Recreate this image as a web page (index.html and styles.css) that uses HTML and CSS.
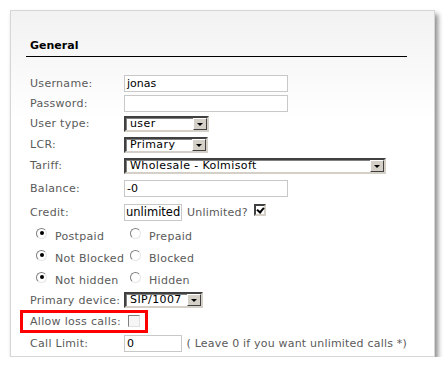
FILE: index.html
```html
<!DOCTYPE html>
<html lang="en">
<head>
    <meta charset="UTF-8">
    <title>User - General</title>
    <link rel="stylesheet" href="styles.css">
</head>
<body>
    <div class="panel">
        <div class="section">
            <h2 class="section-title">General</h2>

            <div class="row">
                <label class="lbl">Username:</label>
                <span class="field wide">jonas</span>
            </div>
            <div class="row">
                <label class="lbl">Password:</label>
                <span class="field wide"></span>
            </div>
            <div class="row row-select">
                <label class="lbl">User type:</label>
                <span class="select w-user"><span class="sel-text">user</span><span class="sel-btn"></span></span>
            </div>
            <div class="row row-select">
                <label class="lbl">LCR:</label>
                <span class="select w-lcr"><span class="sel-text">Primary</span><span class="sel-btn"></span></span>
            </div>
            <div class="row row-select">
                <label class="lbl">Tariff:</label>
                <span class="select w-tariff"><span class="sel-text">Wholesale - Kolmisoft</span><span class="sel-btn"></span></span>
            </div>
            <div class="row row-tall">
                <label class="lbl">Balance:</label>
                <span class="field wide">-0</span>
            </div>
            <div class="row row-tall">
                <label class="lbl">Credit:</label>
                <span class="field short big">unlimited</span>
                <span class="note">Unlimited?</span>
                <span class="check checked"></span>
            </div>

            <div class="radios">
                <div class="radio-row">
                    <span class="radio-opt"><span class="radio on"></span>Postpaid</span>
                    <span class="radio-opt"><span class="radio"></span>Prepaid</span>
                </div>
                <div class="radio-row">
                    <span class="radio-opt"><span class="radio on"></span>Not Blocked</span>
                    <span class="radio-opt"><span class="radio"></span>Blocked</span>
                </div>
                <div class="radio-row">
                    <span class="radio-opt"><span class="radio on"></span>Not hidden</span>
                    <span class="radio-opt"><span class="radio"></span>Hidden</span>
                </div>
            </div>

            <div class="row row-device">
                <label class="lbl">Primary device:</label>
                <span class="select w-device"><span class="sel-text">SIP/1007</span><span class="sel-btn"></span></span>
            </div>
            <div class="row row-loss">
                <label class="lbl">Allow loss calls:</label>
                <span class="check"></span>
                <span class="highlight"></span>
            </div>
            <div class="row">
                <label class="lbl">Call Limit:</label>
                <span class="field short">0</span>
                <span class="note">( Leave 0 if you want unlimited calls *)</span>
            </div>
        </div>
    </div>
</body>
</html>
```

FILE: styles.css
```css
body {
    margin: 0;
    background: #fff;
    font-family: "DejaVu Sans", Verdana, sans-serif;
    font-size: 11px;
    color: #5a5a5a;
}
.panel {
    margin: 10px 0 0 10px;
    width: 423px;
    height: 345px;
    border: 1px solid #d6d6d6;
    background: linear-gradient(#f2f2f2, #fff 110px);
    box-shadow: 3px 4px 5px rgba(0, 0, 0, 0.45);
}
.section {
    margin-left: 15px;
    width: 381px;
    padding-top: 28px;
}
.section-title {
    margin: 0;
    padding: 0 0 4px 4px;
    font-size: 11px;
    font-weight: bold;
    color: #000;
    border-bottom: 1px solid #000;
}
.section-title + .row {
    margin-top: 16px;
}
.row {
    position: relative;
    display: flex;
    align-items: center;
    height: 20px;
    padding-left: 4px;
}
.row-select {
    height: 21px;
}
.row-tall {
    height: 24px;
}
.row-device {
    height: 18px;
}
.row-loss {
    height: 24px;
}
.lbl {
    width: 94px;
    flex: none;
    letter-spacing: 0.3px;
}
.field {
    box-sizing: border-box;
    height: 17px;
    border: 1px solid #c8c8c8;
    background: #fff;
    color: #000;
    padding: 0 2px;
    line-height: 15px;
    font-size: 11px;
}
.wide {
    width: 164px;
}
.short {
    width: 58px;
}
.big {
    font-size: 11.5px;
    padding: 0 1px;
}
.note {
    margin-left: 5px;
    white-space: nowrap;
    letter-spacing: 0.2px;
}
.select {
    box-sizing: border-box;
    display: flex;
    align-items: center;
    height: 16px;
    border: 2px solid;
    border-color: #404040 #d4d0c8 #d4d0c8 #404040;
    box-shadow: inset 1px 1px 0 #808080;
    background: #fff;
    color: #000;
}
.sel-text {
    flex: 1;
    padding-left: 4px;
    line-height: 12px;
    letter-spacing: 0.4px;
}
.sel-btn {
    position: relative;
    box-sizing: border-box;
    width: 14px;
    height: 12px;
    background: #d4d0c8;
    border: 1px solid;
    border-color: #fff #404040 #404040 #fff;
}
.sel-btn::after {
    content: "";
    position: absolute;
    left: 3px;
    top: 4px;
    border: 3px solid transparent;
    border-top: 3px solid #000;
    border-bottom: 0;
}
.w-user { width: 85px; }
.w-lcr { width: 84px; }
.w-tariff { width: 262px; }
.w-device { width: 79px; }
.check {
    box-sizing: border-box;
    position: relative;
    display: inline-block;
    width: 12px;
    height: 12px;
    margin-left: 4px;
    border: 1px solid;
    border-color: #808080 #e0e0e0 #e0e0e0 #808080;
    background: #f6f6f6;
}
.note + .check {
    margin-left: 6px;
    align-self: flex-start;
    margin-top: 4px;
    border: 2px solid;
    border-color: #404040 #d4d0c8 #d4d0c8 #404040;
    background: #fff;
}
.check.checked::after {
    content: "";
    position: absolute;
    left: 2px;
    top: 0;
    width: 3px;
    height: 5px;
    border: solid #000;
    border-width: 0 2px 2px 0;
    transform: rotate(40deg);
}
.highlight {
    position: absolute;
    left: -6px;
    top: 1px;
    width: 122px;
    height: 17px;
    border: 3px solid #f00;
}
.radios {
    padding: 1px 0 0 9px;
}
.radio-row {
    display: flex;
    height: 22px;
    align-items: center;
}
.radio-opt {
    display: flex;
    align-items: center;
    width: 94px;
    letter-spacing: 0.3px;
    padding-top: 1px;
}
.radio {
    box-sizing: border-box;
    position: relative;
    width: 11px;
    height: 11px;
    margin: -7px 8px 0 1px;
    border-radius: 50%;
    border: 1px solid;
    border-color: #808080 #e6e6e6 #e6e6e6 #808080;
    background: #fff;
}
.radio.on::after {
    content: "";
    position: absolute;
    left: 2.5px;
    top: 2.5px;
    width: 4px;
    height: 4px;
    border-radius: 50%;
    background: #000;
}
```
